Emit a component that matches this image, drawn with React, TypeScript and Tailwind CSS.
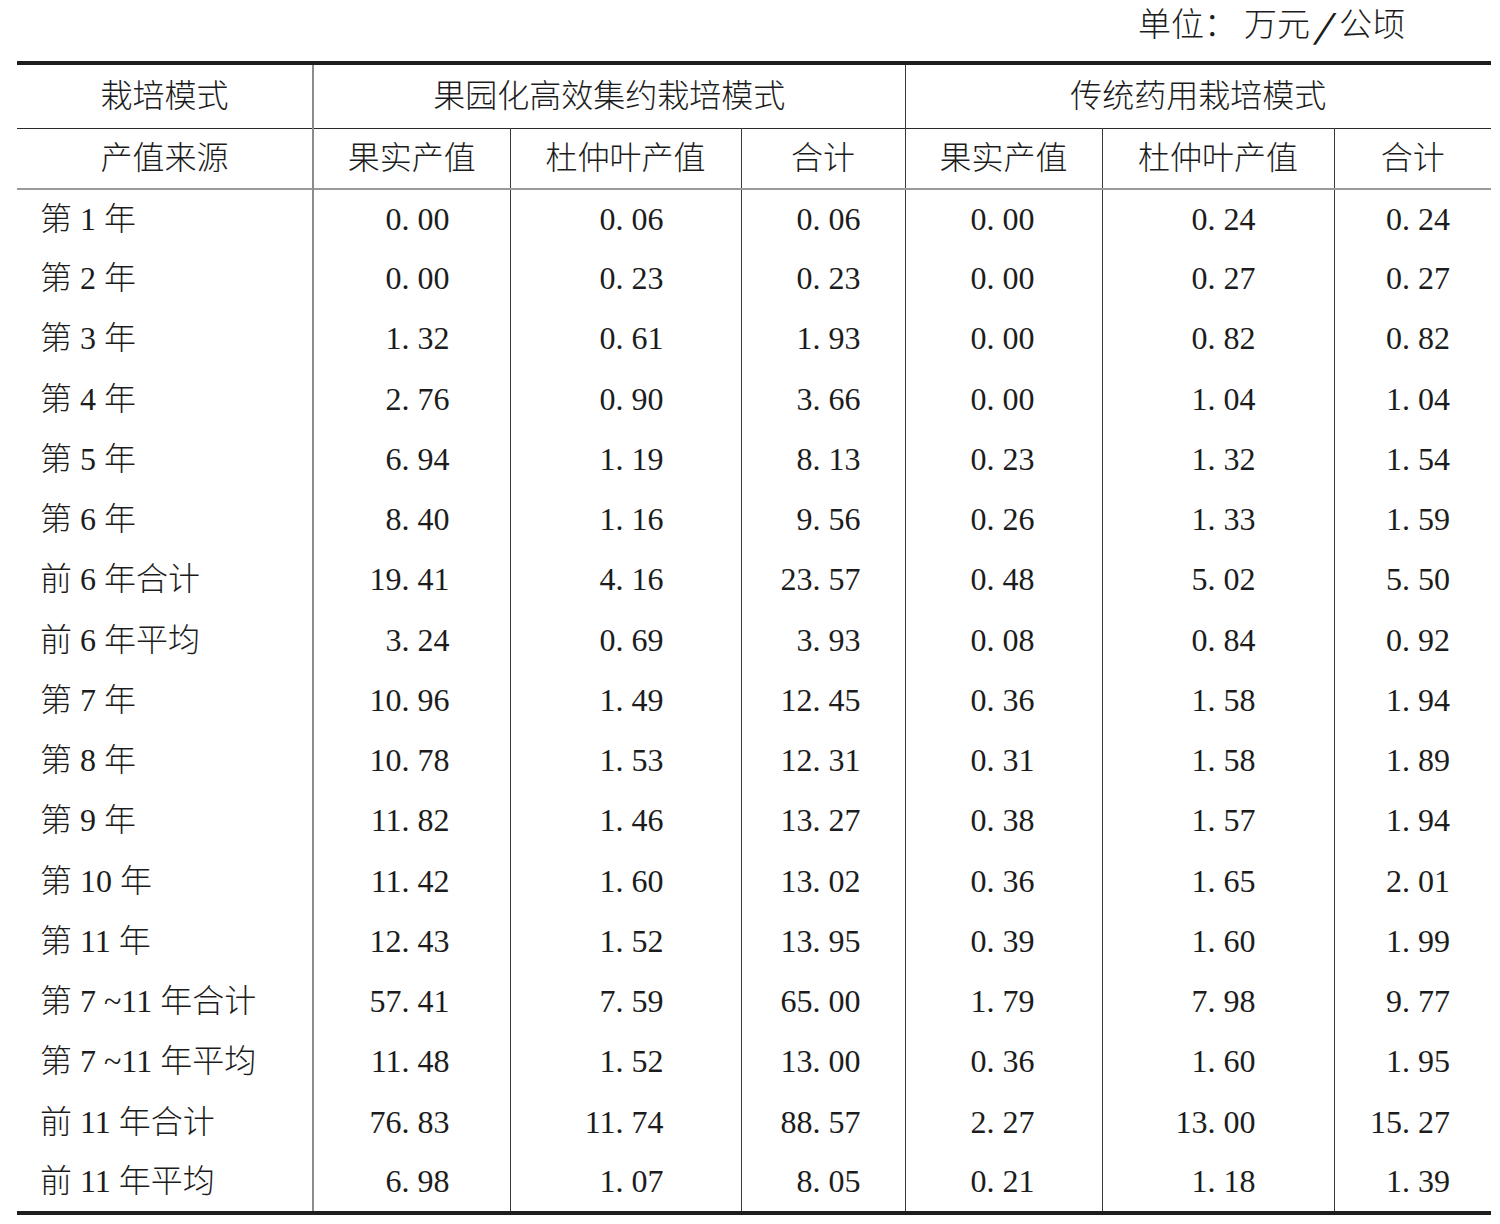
import React from "react";

// 单位：万元/公顷
const rows: [string, string[]][] = [
  ["第 1 年", ["0.00", "0.06", "0.06", "0.00", "0.24", "0.24"]],
  ["第 2 年", ["0.00", "0.23", "0.23", "0.00", "0.27", "0.27"]],
  ["第 3 年", ["1.32", "0.61", "1.93", "0.00", "0.82", "0.82"]],
  ["第 4 年", ["2.76", "0.90", "3.66", "0.00", "1.04", "1.04"]],
  ["第 5 年", ["6.94", "1.19", "8.13", "0.23", "1.32", "1.54"]],
  ["第 6 年", ["8.40", "1.16", "9.56", "0.26", "1.33", "1.59"]],
  ["前 6 年合计", ["19.41", "4.16", "23.57", "0.48", "5.02", "5.50"]],
  ["前 6 年平均", ["3.24", "0.69", "3.93", "0.08", "0.84", "0.92"]],
  ["第 7 年", ["10.96", "1.49", "12.45", "0.36", "1.58", "1.94"]],
  ["第 8 年", ["10.78", "1.53", "12.31", "0.31", "1.58", "1.89"]],
  ["第 9 年", ["11.82", "1.46", "13.27", "0.38", "1.57", "1.94"]],
  ["第 10 年", ["11.42", "1.60", "13.02", "0.36", "1.65", "2.01"]],
  ["第 11 年", ["12.43", "1.52", "13.95", "0.39", "1.60", "1.99"]],
  ["第 7 ~11 年合计", ["57.41", "7.59", "65.00", "1.79", "7.98", "9.77"]],
  ["第 7 ~11 年平均", ["11.48", "1.52", "13.00", "0.36", "1.60", "1.95"]],
  ["前 11 年合计", ["76.83", "11.74", "88.57", "2.27", "13.00", "15.27"]],
  ["前 11 年平均", ["6.98", "1.07", "8.05", "0.21", "1.18", "1.39"]],
];

// per-column cell classes (right padding puts the numbers where the print has them)
const numCls = [
  "pr-[60px] border-r border-[#3a3a3a]",
  "pr-[77px] border-r border-[#3a3a3a]",
  "pr-[44px] border-r border-[#3a3a3a]",
  "pr-[67px] border-r border-[#3a3a3a]",
  "pr-[78px] border-r border-[#3a3a3a]",
  "pr-[41px]",
];

const fmt = (v: string) => v.replace(".", ". ");

export default function App() {
  return (
    <div className="w-[1500px] h-[1224px] bg-white text-[#1c1c1c] font-['Liberation_Serif','Noto_Sans_CJK_SC',serif] font-light text-[32px] leading-none">
      <div className="h-[61px] flex items-start justify-end pr-[95px] pt-[9px] text-[33px]">
        单位<span className="mr-[7px]">：</span>万元
        <span className="inline-block mx-[8px] font-['Noto_Sans_CJK_SC',sans-serif] scale-x-[1.9]">/</span>
        公顷
      </div>
      <table className="ml-[17px] w-[1474px] table-fixed border-collapse border-y-[4px] border-[#1e1e1e]">
        <colgroup>
          <col className="w-[296px]" />
          <col className="w-[197px]" />
          <col className="w-[231px]" />
          <col className="w-[164px]" />
          <col className="w-[197px]" />
          <col className="w-[232px]" />
          <col className="w-[157px]" />
        </colgroup>
        <thead>
          <tr className="h-[65px] border-b border-[#2a2a2a]">
            <th className="font-light text-center border-r-2 border-[#8c8c8c]">栽培模式</th>
            <th colSpan={3} className="font-light text-center border-r border-[#3a3a3a]">
              果园化高效集约栽培模式
            </th>
            <th colSpan={3} className="font-light text-center">传统药用栽培模式</th>
          </tr>
          <tr className="h-[61px] border-b-2 border-[#9a9a9a]">
            <th className="font-light text-center border-r-2 border-[#8c8c8c]">产值来源</th>
            <th className="font-light text-center border-r border-[#3a3a3a]">果实产值</th>
            <th className="font-light text-center border-r border-[#3a3a3a]">杜仲叶产值</th>
            <th className="font-light text-center border-r border-[#3a3a3a]">合计</th>
            <th className="font-light text-center border-r border-[#3a3a3a]">果实产值</th>
            <th className="font-light text-center border-r border-[#3a3a3a]">杜仲叶产值</th>
            <th className="font-light text-center">合计</th>
          </tr>
        </thead>
        <tbody>
          {rows.map(([label, vals], r) => (
            <tr key={label} className={r % 4 === 3 ? "h-[61px]" : "h-[60px]"}>
              <td className="pl-[23px] pb-[2px] text-left border-r-2 border-[#8c8c8c] whitespace-pre">
                {label}
              </td>
              {vals.map((v, i) => (
                <td key={i} className={`pb-[2px] text-right whitespace-pre ${numCls[i]}`}>
                  {fmt(v)}
                </td>
              ))}
            </tr>
          ))}
        </tbody>
      </table>
    </div>
  );
}
